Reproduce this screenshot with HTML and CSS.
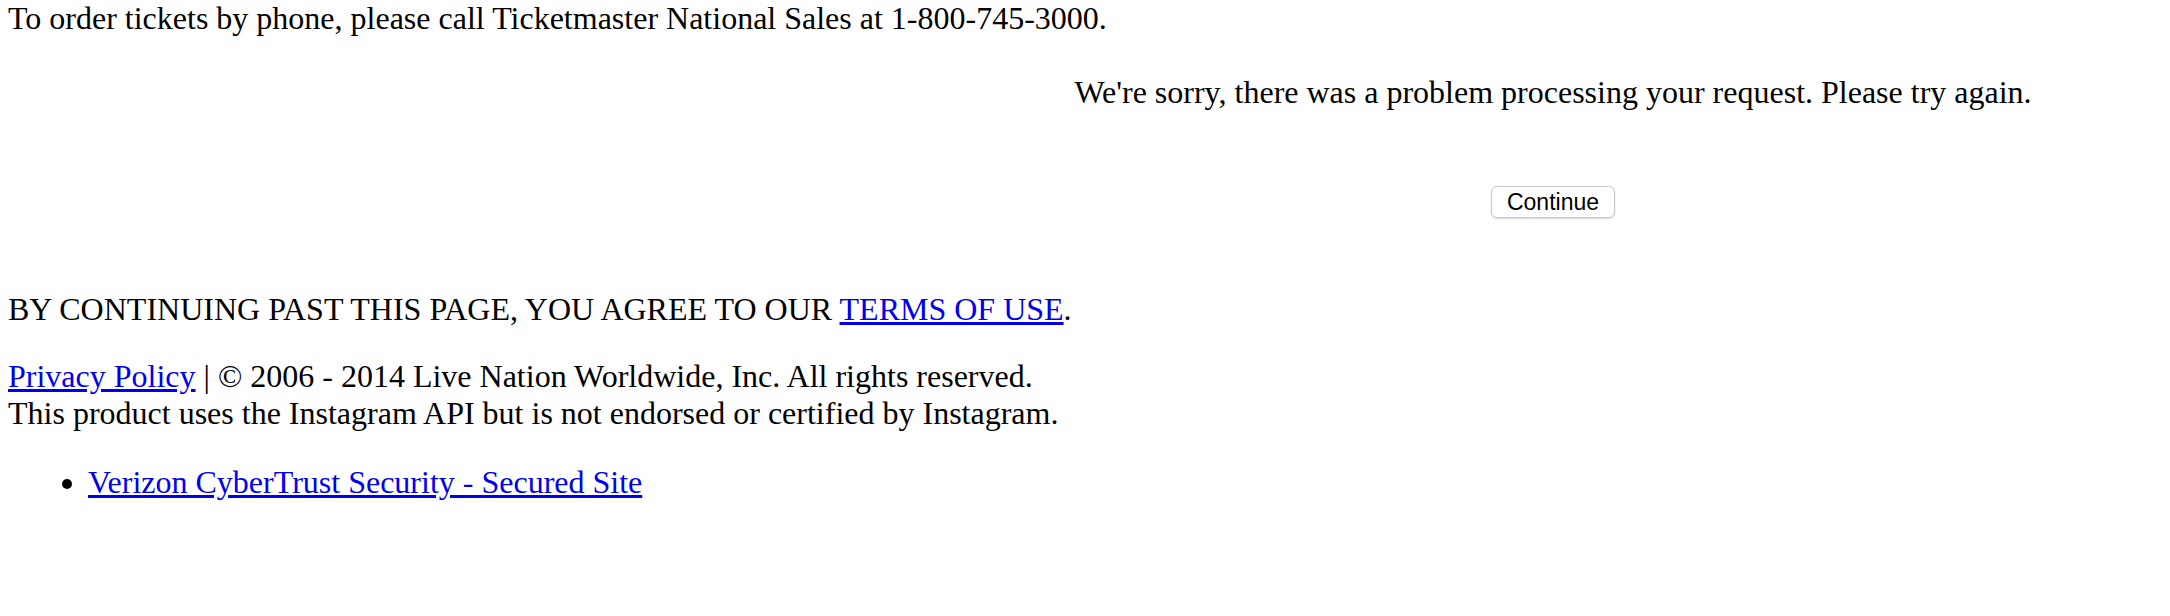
FILE: index.html
```html
<!DOCTYPE html>
<html lang="en">
<head>
  <meta charset="UTF-8">
  <title>Ticketmaster</title>
  <link rel="stylesheet" href="styles.css">
</head>
<body>
  <p class="phone">To order tickets by phone, please call Ticketmaster National Sales at 1-800-745-3000.</p>

  <div class="notice">
    <p class="error">We're sorry, there was a problem processing your request. Please try again.</p>
    <form class="continue-form">
      <button type="button">Continue</button>
    </form>
  </div>

  <p class="terms">BY CONTINUING PAST THIS PAGE, YOU AGREE TO OUR <a href="#">TERMS OF USE</a>.</p>

  <p class="legal">
    <a href="#">Privacy Policy</a> | &copy; 2006 - 2014 Live Nation Worldwide, Inc. All rights reserved.<br>
    This product uses the Instagram API but is not endorsed or certified by Instagram.
  </p>

  <ul class="seals">
    <li><a href="#">Verizon CyberTrust Security - Secured Site</a></li>
  </ul>
</body>
</html>
```

FILE: styles.css
```css
body {
  margin: 0 8px;
  font-family: "Liberation Serif", "Times New Roman", serif;
  font-size: 32px;
  color: #000;
  background: #fff;
}

a {
  color: #0000ee;
}

p {
  margin: 0;
}

.notice {
  margin-left: 936px;
  text-align: center;
}

.error {
  margin-top: 37px;
}

.continue-form {
  margin-top: 70px;
}

.continue-form button {
  font-family: "Liberation Sans", Arial, sans-serif;
  font-size: 23px;
  line-height: 26px;
  padding: 2px 15px;
  color: #000;
  background: #fff;
  border: 1px solid #c9c9c9;
  border-radius: 6px;
  box-shadow: 0 1px 2px rgba(0, 0, 0, 0.15);
}

.terms {
  margin-top: 73px;
}

.legal {
  margin-top: 30px;
}

.seals {
  margin: 32px 0 0;
  padding-left: 80px;
}
```
